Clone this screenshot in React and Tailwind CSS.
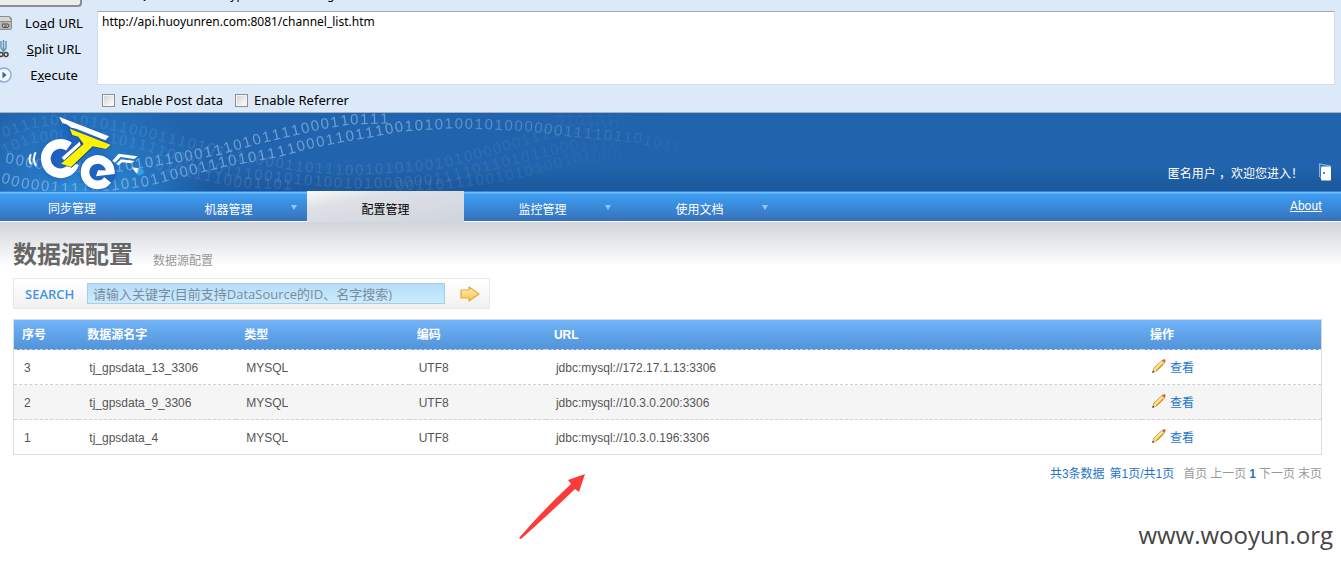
import React from "react";

const BRIGHT_A = [[6, 178], [20, 182], [40, 185], [60, 187], [80, 187], [100, 186], [120, 184], [145, 181], [180, 172], [205, 166], [225, 161], [250, 157], [280, 151], [310, 143], [340, 137], [370, 132], [400, 126], [450, 123], [490, 124], [530, 126], [560, 130], [600, 134], [640, 138], [700, 152]];
const BRIGHT_B = [[10, 158], [30, 162], [60, 166], [90, 167], [120, 166], [140, 163], [165, 159], [190, 155], [220, 149], [260, 138], [290, 131], [320, 124], [350, 119], [385, 118]];
const FAINT = [
  [[6, 131], [30, 123], [60, 119], [90, 121], [120, 126], [150, 133], [200, 145], [240, 156], [300, 166], [350, 170], [400, 167], [440, 163], [490, 150], [530, 138], [560, 130], [620, 124]],
  [[6, 148], [30, 138], [60, 134], [90, 135], [120, 139], [150, 146], [200, 164], [240, 172], [300, 179], [350, 183], [400, 182], [440, 178], [490, 165], [530, 155], [570, 145], [620, 142]],
  [[150, 162], [200, 174], [240, 182], [290, 184]],
  [[400, 184], [440, 184], [490, 178], [530, 170], [570, 158], [620, 154]],
  [[560, 119], [620, 119], [660, 121]],
];
const BITS = "0000011110110101100011101011110001101110010101001010";

function placeDigits(points, step) {
  const out = [];
  let carry = 0;
  for (let i = 0; i < points.length - 1; i++) {
    const [x1, y1] = points[i];
    const [x2, y2] = points[i + 1];
    const len = Math.hypot(x2 - x1, y2 - y1);
    const angle = (Math.atan2(y2 - y1, x2 - x1) * 180) / Math.PI;
    let d = carry;
    while (d < len) {
      out.push({ x: x1 + ((x2 - x1) * d) / len, y: y1 + ((y2 - y1) * d) / len, angle });
      d += step;
    }
    carry = d - len;
  }
  return out;
}

function DigitTrail({ points, strength, fadeFrom, shift }) {
  return placeDigits(points, 10).map((p, i) => (
    <text
      key={i}
      transform={`translate(${p.x} ${p.y}) rotate(${p.angle})`}
      textAnchor="middle"
      dominantBaseline="central"
      opacity={strength * Math.max(0.04, 1 - Math.max(0, p.x - fadeFrom) / (700 - fadeFrom))}
    >
      {BITS[(i + shift) % BITS.length]}
    </text>
  ));
}

function BinaryTrails() {
  return (
    <svg aria-hidden="true" className="absolute left-0 top-0 h-full w-[720px]" viewBox="0 113 720 78" fontFamily="Liberation Sans, Arial, sans-serif" fontSize="15" fill="#9cc6ee">
      {FAINT.map((points, i) => (
        <DigitTrail key={i} points={points} strength={0.17} fadeFrom={380} shift={i * 9 + 4} />
      ))}
      <DigitTrail points={BRIGHT_B} strength={0.6} fadeFrom={350} shift={0} />
      <DigitTrail points={BRIGHT_A} strength={0.6} fadeFrom={400} shift={0} />
    </svg>
  );
}

function Logo() {
  return (
    <svg role="img" aria-label="eTe" className="relative block h-[78px] w-[200px]" viewBox="0 9 600 234">
      <defs>
        <filter id="halo" x="-20%" y="-20%" width="140%" height="140%">
          <feGaussianBlur stdDeviation="9" />
        </filter>
        <linearGradient id="drop" x1="0" y1="0" x2="1" y2="0.2">
          <stop offset="0.45" stopColor="#fff" />
          <stop offset="0.65" stopColor="#2aa4e6" />
        </linearGradient>
      </defs>
      <g fill="#1b5fc0" filter="url(#halo)" opacity="0.9">
        <circle cx="177" cy="148" r="60" />
        <circle cx="293" cy="187" r="55" />
        <path d="M175 20 330 80 330 110 280 120 200 100z" />
      </g>
      <g fill="none" stroke="#fff">
        <path d="M207 110A44 44 0 1 0 223 160" strokeWidth="29" />
        <path d="M190 148 248 97" strokeWidth="15" />
        <path d="M93 133Q84 147 93 163M107 127Q96 148 108 168" strokeWidth="6" />
      </g>
      <circle cx="293" cy="186" r="53" fill="#1d64be" />
      <path d="M323 210A38 38 0 1 1 331 184" fill="none" stroke="#fff" strokeWidth="26" />
      <path d="M344 182 344 192 288 199 294 181z" fill="#fff" />
      <path fill="#fff" d="M177 20 327 79 316 91 228 56 214 53 200 43 187 39z" />
      <path fill="#174f9c" d="M205 55 334 103 320 119 282 111 215 173 180 162 242 105 235 82 215 77z" />
      <path fill="#fff200" d="M209 56 332 104 318 117 278 109 213 171 183 161 251 102 235 80 217 75z" />
      <path fill="#fff" d="M337 152 356 131 413 139 403 147 362 141 345 158zM349 162 363 148 404 153 394 160 366 157 356 166z" />
      <path fill="url(#drop)" d="M396 172 426 176Q436 184 428 193L418 197Q406 190 396 172z" />
    </svg>
  );
}

function DriveIcon() {
  return (
    <svg aria-hidden="true" className="h-4 w-3 shrink-0" viewBox="0 0 12 16">
      <path d="M0 1H9Q12 2 12 5V13Q12 15 10 15H0z" fill="#8d8d8d" />
      <path d="M0 2H9L11 6H0z" fill="#d6d6d6" />
      <path d="M0 7H11V14H0z" fill="#b9b9b9" />
      <path d="M2 9H8Q10 10 8 12.500H3Q1 11 3 9M4 11H7" fill="none" stroke="#505050" />
    </svg>
  );
}

function ScissorsIcon() {
  return (
    <svg aria-hidden="true" className="h-[18px] w-3 shrink-0" viewBox="0 0 12 18" fill="none">
      <path d="M1 1V8L4 12M6 1V8L3 12M3.500 0V10" stroke="#5f93ab" strokeWidth="1.400" />
      <circle cx="1" cy="14.500" r="2" stroke="#444" strokeWidth="1.500" />
      <circle cx="6" cy="14.500" r="2" stroke="#444" strokeWidth="1.500" />
    </svg>
  );
}

function PlayIcon() {
  return (
    <svg aria-hidden="true" className="h-4 w-3 shrink-0" viewBox="0 0 12 16">
      <circle cx="4" cy="8" r="7" fill="#f4f8fd" stroke="#91add6" strokeWidth="1.500" />
      <path d="M2.500 4.500 6.500 8 2.500 11.500z" fill="#2668bd" />
    </svg>
  );
}

function DoorIcon() {
  return (
    <svg aria-hidden="true" className="h-[18px] w-3" viewBox="0 0 12 18">
      <path d="M.6 14V1L11 3V4" fill="none" stroke="#84b5ea" strokeWidth="1.200" />
      <path d="M1 14 3 15.500" stroke="#84b5ea" />
      <rect x="2" y="3.500" width="10" height="14" rx="1" fill="#fff" />
      <path d="M4 10H6M5 9V11" stroke="#2163ac" />
    </svg>
  );
}

function PencilIcon() {
  return (
    <svg aria-hidden="true" className="-mt-1 h-[14px] w-[14px]" viewBox="0 0 14 14">
      <path d="M.5 13.500 2 9 10 1.500 12.500 4 4.500 12z" fill="#f9cf3a" stroke="#a98a5a" strokeWidth=".8" />
      <path d="M3 10 10 3" stroke="#fff0a5" strokeWidth="1.200" />
      <path d="M4.500 11.500 11.500 5" stroke="#c08a14" strokeWidth="1" />
      <path d="M8.800 2.600 10 1.500 12.500 4 11.300 5.200z" fill="#cfd4df" />
      <path d="M10 1.500Q11 0 13 .3 14.200 2 12.500 4z" fill="#ee5a12" />
      <path d="M2 9.300 4.400 12 1 13.300z" fill="#f5dfb8" />
      <path d="M.3 13.800 1 11.500 2.500 13z" fill="#5a3010" />
    </svg>
  );
}

function GoIcon() {
  return (
    <svg aria-hidden="true" className="h-4 w-5" viewBox="0 0 20 16">
      <defs>
        <linearGradient id="gold" x1="0" y1="0" x2="0" y2="1">
          <stop offset="0" stopColor="#fff3b8" />
          <stop offset="1" stopColor="#fbc04c" />
        </linearGradient>
      </defs>
      <path d="M1 4H9V1L19 8 9 15V12H1z" fill="url(#gold)" stroke="#e5a93c" strokeWidth="1.200" strokeLinejoin="round" />
    </svg>
  );
}

const actions = [
  { icon: <DriveIcon />, label: <>Lo<u>a</u>d URL</> },
  { icon: <ScissorsIcon />, label: <><u>S</u>plit URL</> },
  { icon: <PlayIcon />, label: <>E<u>x</u>ecute</> },
];

function Toolbar() {
  return (
    <section className="border-b border-[#a5b3c4] bg-[#dbe9f8] font-['Noto_Sans','Noto_Sans_CJK_SC',sans-serif] text-[13px] leading-4 text-black">
      <div className="flex h-[11px] items-start overflow-hidden">
        <div className="h-[7px] w-[82px] rounded-br-sm border-b-2 border-r-2 border-[#8a8d92] bg-[#ececec]" />
        <div className="flex h-[5px] items-end gap-4 overflow-hidden pl-[49px] text-[12px] leading-5">
          <span>SQL</span>
          <span>XSS</span>
          <span>Encryption</span>
          <span>Encoding</span>
        </div>
      </div>
      <div className="flex pr-[6px]">
        <div className="-mt-px flex w-[97px] shrink-0 flex-col">
          {actions.map((a, i) => (
            <button key={i} type="button" className="flex h-[26px] items-center">
              {a.icon}
              <span className="w-[84px] text-center">{a.label}</span>
            </button>
          ))}
        </div>
        <textarea
          aria-label="URL"
          defaultValue="http://api.huoyunren.com:8081/channel_list.htm"
          className="h-[74px] grow resize-none border border-[#d5dde8] border-t-[#a2a8b0] bg-white px-1 py-[2px] text-[12px] leading-4 outline-none"
        />
      </div>
      <div className="flex h-6 items-center gap-3 pl-[102px]">
        {["Enable Post data", "Enable Referrer"].map((t) => (
          <label key={t} className="flex items-center gap-[6px]">
            <input type="checkbox" className="h-[13px] w-[13px] appearance-none border border-[#8e8f8f] bg-linear-to-br from-[#cdd1d6] to-white shadow-[inset_0_0_0_1px_#f4f4f4]" />
            {t}
          </label>
        ))}
      </div>
    </section>
  );
}

function Banner() {
  return (
    <header className="relative flex h-[78px] items-end justify-between overflow-hidden bg-[radial-gradient(circle_at_85px_90px,#3193d8_0,#2676c2_60px,transparent_125px),linear-gradient(#2163ac_70%,#1c5799)]">
      <BinaryTrails />
      <Logo />
      <div className="relative flex items-end gap-4 pb-[10px] pr-[10px] text-[12px] leading-4 text-white">
        <span className="-mb-px">匿名用户 ，欢迎您进入！</span>
        <a href="#exit" aria-label="退出"><DoorIcon /></a>
      </div>
    </header>
  );
}

const menu = [
  { name: "机器管理", arrow: true },
  { name: "配置管理", active: true },
  { name: "监控管理", arrow: true },
  { name: "使用文档", arrow: true },
];

function Nav() {
  return (
    <nav className="flex h-[31px] border-b border-white bg-[linear-gradient(#2e85db_0,#2e85db_1px,#74bdfb_1px,#74bdfb_2px,#3c9ff5_3px,#3870b9)] text-[12px] leading-4 text-white">
      <a href="#sync" className="w-[150px] pr-[6px] pt-[10px] text-center">同步管理</a>
      {menu.map((m) => (
        <a
          key={m.name}
          href={"#" + m.name}
          className={"relative w-[157px] pt-[11px] text-center " + (m.active ? "-mb-px bg-linear-to-br from-[#fafafa] via-[#dde0e5] via-30% to-[#d0d5de] text-black" : "")}
        >
          {m.name}
          {m.arrow && (
            <svg aria-hidden="true" className="absolute right-[10px] top-[14px] h-[5px] w-[6px]" viewBox="0 0 6 5">
              <path d="M0 0H6L3 5z" fill="#8cc8fb" />
            </svg>
          )}
        </a>
      ))}
      <a href="#about" className="ml-auto pr-[19px] pt-[7px] font-['Roboto',sans-serif] underline">About</a>
    </nav>
  );
}

const rows = [
  { id: 3, name: "tj_gpsdata_13_3306", url: "jdbc:mysql://172.17.1.13:3306" },
  { id: 2, name: "tj_gpsdata_9_3306", url: "jdbc:mysql://10.3.0.200:3306" },
  { id: 1, name: "tj_gpsdata_4", url: "jdbc:mysql://10.3.0.196:3306" },
];

function SourceTable() {
  return (
    <table className="mt-[10px] w-full table-fixed border-separate border-spacing-0 border border-[#dcdcdc] text-left text-[12px] leading-4 text-[#555]">
      <colgroup>
        <col className="w-[5%]" />
        <col className="w-[12%]" />
        <col className="w-[13.2%]" />
        <col className="w-[10.5%]" />
        <col className="w-[45.6%]" />
        <col className="w-[13.7%]" />
      </colgroup>
      <thead>
        <tr className="h-[30px] bg-linear-to-b from-[#72b3f9] to-[#4f93d9] text-white">
          {["序号", "数据源名字", "类型", "编码", "URL", "操作"].map((h) => (
            <th key={h} scope="col" className="border-b border-dashed border-[#d0d4d8] px-2 py-0 font-bold">{h}</th>
          ))}
        </tr>
      </thead>
      <tbody>
        {rows.map((r) => (
          <tr key={r.id} className="h-[35px] even:bg-[#f5f5f5] [&>td]:border-b [&>td]:border-dashed [&>td]:border-[#d0d0d0] [&>td]:px-[10px] [&>td]:pb-0 [&>td]:pt-[2px] last:h-[34px] last:[&>td]:border-b-0">
            <td>{r.id}</td>
            <td>{r.name}</td>
            <td>MYSQL</td>
            <td>UTF8</td>
            <td>{r.url}</td>
            <td>
              <a href={"#view-" + r.id} className="flex items-center gap-1 text-[#1f75cc]">
                <PencilIcon />
                查看
              </a>
            </td>
          </tr>
        ))}
      </tbody>
    </table>
  );
}

export default function App() {
  return (
    <div className="bg-white font-['Liberation_Sans','Noto_Sans_CJK_SC',sans-serif]">
      <Toolbar />
      <Banner />
      <Nav />
      <main className="relative bg-linear-to-b from-[#d0d5db] to-white to-[44px] pb-4 pl-[13px] pr-[19px] pt-[17px]">
        <div className="flex items-end gap-5">
          <h1 className="text-[24px] font-bold leading-8 text-[#666]">数据源配置</h1>
          <p className="pb-[2px] text-[12px] leading-4 text-[#999]">数据源配置</p>
        </div>
        <form className="mt-[7px] flex h-[31px] w-[477px] items-center border border-[#e8e8e8] bg-linear-to-b from-white to-[#f1f1f1]">
          <label htmlFor="keyword" className="w-[73px] pl-[11px] font-['Open_Sans',sans-serif] text-[13px] font-semibold leading-4 text-[#4295e4]">SEARCH</label>
          <input
            id="keyword"
            type="text"
            placeholder="请输入关键字(目前支持DataSource的ID、名字搜索)"
            className="h-[21px] w-[358px] border border-[#a9cde8] bg-linear-to-b from-[#b4dcf9] to-[#cdedfe] px-[5px] font-['Open_Sans','Noto_Sans_CJK_SC',sans-serif] text-[13px] leading-4 outline-none placeholder:text-[#7c8b9b]"
          />
          <button type="submit" aria-label="搜索" className="ml-[15px]"><GoIcon /></button>
        </form>
        <SourceTable />
        <div className="mt-[11px] flex justify-end gap-[3px] text-[12px] leading-4 text-[#999]">
          <span className="mr-[2px] text-[#1f75cc]">共3条数据</span>
          <span className="mr-[6px] text-[#1f75cc]">第1页/共1页</span>
          <span>首页</span>
          <span>上一页</span>
          <b className="text-[#1f75cc]">1</b>
          <span>下一页</span>
          <span>末页</span>
        </div>
        <svg aria-hidden="true" className="absolute left-[519px] top-[250px] h-[68px] w-[68px]" viewBox="0 0 68 68">
          <path d="M66 2 60 20 56 17Q30 42 2 67L0 66Q25 37 52 12L49 8z" fill="#fb3a3a" />
        </svg>
      </main>
      <footer className="flex justify-end pr-2 pt-[21px] font-['Open_Sans',sans-serif] text-[24px] leading-8 text-[#444]">www.wooyun.org</footer>
    </div>
  );
}
